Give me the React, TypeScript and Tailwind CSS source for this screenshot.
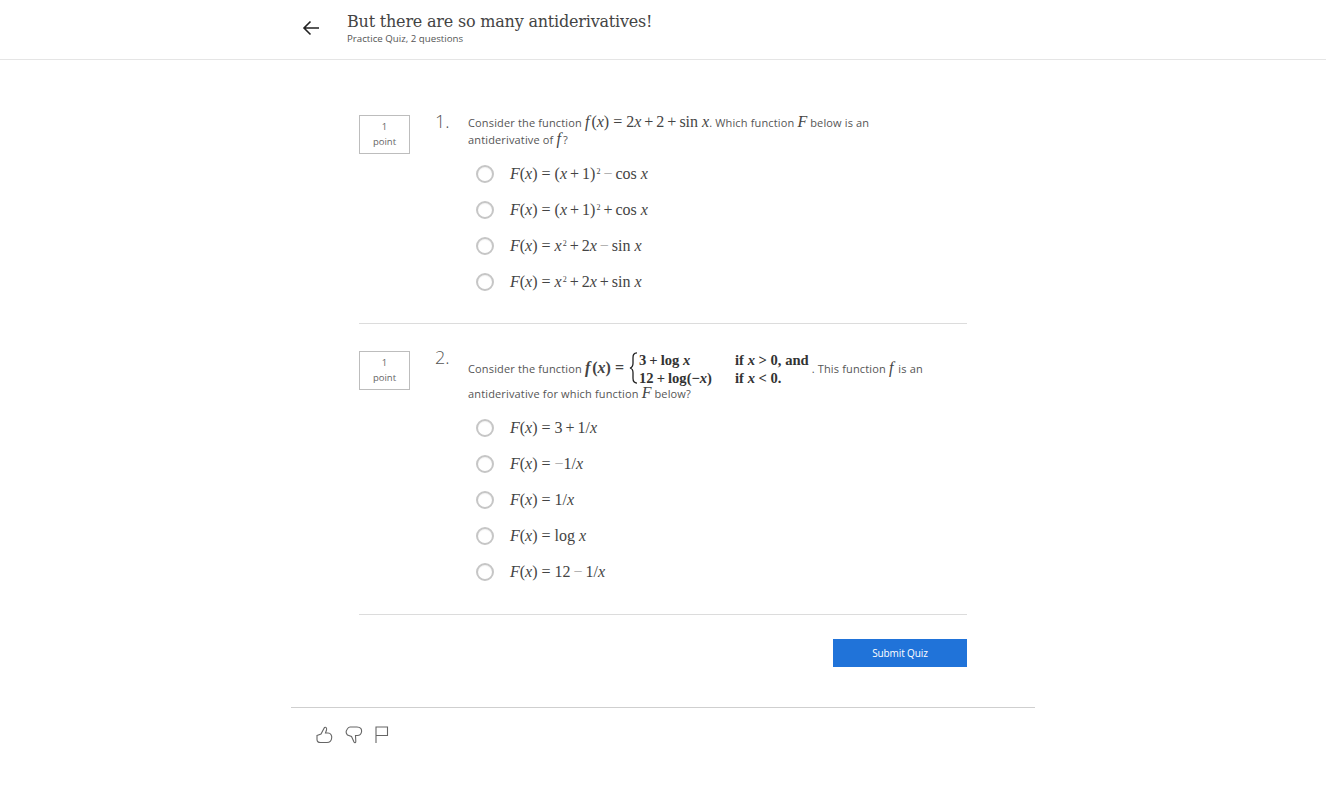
const I = ({ children }: { children: React.ReactNode }) => <i className="italic">{children}</i>;

// italic f leans into whatever follows it
const SmallF = () => <i className="pr-[2px] italic">f</i>;

const Minus = () => <span className="mx-[3px] text-[#a8a8a8]">−</span>;
const Plus = () => <span className="mx-[3px]">+</span>;
const Eq = () => <span className="mx-[4px]">=</span>;
const Sup = () => <sup className="ml-px align-baseline relative top-[-5px] text-[8px] leading-none">2</sup>;

const math = "font-['Liberation_Serif',serif] text-[16px] leading-none tracking-normal text-[#444] whitespace-nowrap";

const Fx = () => (
	<>
		<I>F</I>(<I>x</I>)
		<Eq />
	</>
);

const q1Options = [
	<><Fx />(<I>x</I><Plus />1)<Sup /><Minus />cos <I>x</I></>,
	<><Fx />(<I>x</I><Plus />1)<Sup /><Plus />cos <I>x</I></>,
	<><Fx /><I>x</I><Sup /><Plus />2<I>x</I><Minus />sin <I>x</I></>,
	<><Fx /><I>x</I><Sup /><Plus />2<I>x</I><Plus />sin <I>x</I></>,
];

const q2Options = [
	<><Fx />3<Plus />1/<I>x</I></>,
	<><Fx /><span className="text-[#a8a8a8]">−</span>1/<I>x</I></>,
	<><Fx />1/<I>x</I></>,
	<><Fx />log <I>x</I></>,
	<><Fx />12<Minus />1/<I>x</I></>,
];

const Option = ({ children }: { children: React.ReactNode }) => (
	<div className="flex h-9 items-center pl-[8px]">
		<span className="h-[18px] w-[18px] shrink-0 rounded-full border-2 border-[#c6c6c6] bg-white shadow-[inset_0_1px_1px_rgba(0,0,0,0.06)]"></span>
		<span className={`ml-[16px] ${math}`}>{children}</span>
	</div>
);

const PointBox = () => (
	<div className="flex h-[39px] w-[51px] shrink-0 flex-col items-center justify-center border border-[#bdbdbd] pb-px text-[9.5px] leading-[15px] text-[#666]">
		<span>1</span>
		<span>point</span>
	</div>
);

const Brace = () => (
	<svg width="9" height="32" viewBox="0 0 9 34" preserveAspectRatio="none" className="mx-px shrink-0" fill="none" stroke="#222" strokeWidth="1.3">
		<path d="M8 1C4.5 1 4 3 4 6V12C4 15 3 16.5 1 17C3 17.5 4 19 4 22V28C4 31 4.5 33 8 33" />
	</svg>
);

const BackArrow = () => (
	<svg width="18" height="16" viewBox="0 0 18 16" fill="none" stroke="#222" strokeWidth="1.6">
		<path d="M17 8H2M8.5 1.5L2 8L8.5 14.5" />
	</svg>
);

const ThumbUp = () => (
	<svg width="17" height="18" viewBox="0 0 17 18" fill="none" stroke="#666" strokeWidth="1.1">
		<path d="M1 9.5L5 8L8.5 1.5C10 .8 11 2 10.5 4L9.5 7H12C15 7 16 10 15.7 12C15.3 15.5 13.5 16.5 11 16.5H4.5C2 16.5 1 15.5 1 13.5Z" />
	</svg>
);

const ThumbDown = () => (
	<svg width="18" height="18" viewBox="0 0 18 18" fill="none" stroke="#666" strokeWidth="1.1">
		<path d="M5 1H12C15.5 1 17 3 16.5 6C16 8.5 14.5 9.5 12.5 9.5L10.5 9.5L10.8 15.5C10.8 17 9.5 17 9 16L6.5 10.5L2.5 9C1 7.5 1 5 2 3.5C2.8 2 3.5 1 5 1Z" />
	</svg>
);

const Flag = () => (
	<svg width="14" height="18" viewBox="0 0 14 18" fill="none" stroke="#666" strokeWidth="1.1">
		<path d="M1 17V1H12.5V9.5H1" />
	</svg>
);

export default function App() {
	return (
		<div className="min-h-[809px] bg-white font-['Open_Sans',sans-serif] text-[#555]">
			<header className="h-[60px] border-b border-[#e5e5e5]">
				<div className="mx-auto flex w-[744px] items-start">
					<div className="ml-[11px] mt-[20px] w-[45px]">
						<BackArrow />
					</div>
					<div>
						<h1 className="mt-[11px] font-['DejaVu_Serif',serif] text-[16px] leading-[21px] tracking-[-0.2px] text-[#444]">But there are so many antiderivatives!</h1>
						<p className="text-[9.7px] leading-[13px] text-[#555]">Practice Quiz, 2 questions</p>
					</div>
				</div>
			</header>

			<main className="mx-auto w-[744px]">
				<div className="mx-auto w-[608px] pt-[55px]">
					<section className="flex border-b border-[#dcdcdc] pb-[23px]">
						<PointBox />
						<span className="ml-[25px] -mt-px h-[14px] w-[33px] text-[18px] font-light leading-[14px] text-[#555]">1.</span>
						<div className="flex-1">
							<div className="-mt-px text-[11px] leading-[17px] tracking-[0.15px]">
								<div className="whitespace-nowrap">
									Consider the function <span className={math}><SmallF />(<I>x</I>)<Eq />2<I>x</I><Plus />2<Plus />sin <I>x</I></span>. Which function <span className={math}><I>F</I></span> below is an
								</div>
								<div>antiderivative of <span className={math}><SmallF /></span>?</div>
							</div>
							<div className="mt-[8px]">
								{q1Options.map((o, i) => (
									<Option key={i}>{o}</Option>
								))}
							</div>
						</div>
					</section>

					<section className="flex border-b border-[#dcdcdc] pb-[24px] pt-[27px]">
						<PointBox />
						<span className="ml-[25px] -mt-px h-[14px] w-[33px] text-[18px] font-light leading-[14px] text-[#555]">2.</span>
						<div className="flex-1">
							<div className="text-[11px] leading-[17px] tracking-[0.15px]">
								<div className="flex h-[34px] items-center whitespace-nowrap">
									<span>Consider the function&nbsp;</span>
									<span className={`${math} font-bold text-[#222]`}><SmallF />(<I>x</I>)<Eq /></span>
									<Brace />
									<div className="mt-px grid grid-cols-[96px_auto] font-['Liberation_Serif',serif] text-[14.6px] font-bold leading-[18px] tracking-normal text-[#333]">
										<span>3<Plus />log <I>x</I></span>
										<span>if <I>x</I> &gt; 0, and</span>
										<span>12<Plus />log(−<I>x</I>)</span>
										<span>if <I>x</I> &lt; 0.</span>
									</div>
									<span className="ml-[3px]">. This function <span className={math}><SmallF /></span> is an</span>
								</div>
								<div>antiderivative for which function <span className={math}><I>F</I></span> below?</div>
							</div>
							<div className="mt-[8px]">
								{q2Options.map((o, i) => (
									<Option key={i}>{o}</Option>
								))}
							</div>
						</div>
					</section>

					<div className="mt-[24px] flex justify-end">
						<button className="h-[28px] w-[134px] bg-[#2073d9] text-[10px] tracking-[-0.1px] text-white">Submit Quiz</button>
					</div>
				</div>

				<div className="mt-[40px] flex gap-[12px] border-t border-[#cfcfcf] pl-[25px] pt-[18px]">
					<ThumbUp />
					<ThumbDown />
					<Flag />
				</div>
			</main>
		</div>
	);
}
